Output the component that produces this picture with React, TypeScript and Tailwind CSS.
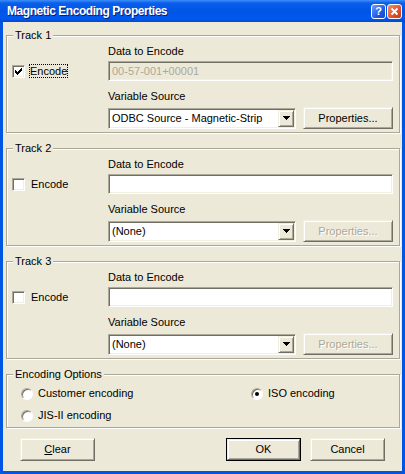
import React from 'react';

const raised =
  'border border-t-[#F1EFE2] border-l-[#F1EFE2] border-b-[#716F64] border-r-[#716F64] shadow-[inset_1px_1px_0_#FFFFFF,inset_-1px_-1px_0_#ACA899] bg-[#ECE9D8]';
const sunken =
  'border border-t-[#ACA899] border-l-[#ACA899] border-b-white border-r-white shadow-[inset_1px_1px_0_#716F64,inset_-1px_-1px_0_#F1EFE2]';

function Group({ title, className = '', children }: { title: string; className?: string; children: React.ReactNode }) {
  return (
    <fieldset
      className={`ml-[3px] mr-[2px] border border-[#ACA899] shadow-[1px_1px_0_#FFFFFF,inset_1px_1px_0_#FFFFFF] ${className}`}
    >
      <legend className="ml-[6px] px-[2px] bg-[#ECE9D8] leading-[13px]">{title}</legend>
      {children}
    </fieldset>
  );
}

function Checkbox({ checked }: { checked?: boolean }) {
  return (
    <div className={`w-[13px] h-[13px] bg-white ${sunken} flex items-center justify-center`}>
      {checked && (
        <svg width="7" height="7" viewBox="0 0 7 7" shapeRendering="crispEdges">
          <path d="M6 0h1v3h-1v1h-1v1h-1v1h-1v1h-1v-1h-1v-1h-1v-3h1v1h1v1h1v-1h1v-1h1v-1h1z" fill="#000" />
        </svg>
      )}
    </div>
  );
}

function Radio({ checked, label }: { checked?: boolean; label: string }) {
  return (
    <div className="flex items-center h-[13px]">
      <div className="w-[12px] h-[12px] rounded-full bg-white border border-t-[#ACA899] border-l-[#ACA899] border-b-white border-r-white shadow-[inset_1px_1px_0_#716F64] flex items-center justify-center">
        {checked && <div className="w-[4px] h-[4px] rounded-full bg-black" />}
      </div>
      <span className="ml-[5px]">{label}</span>
    </div>
  );
}

function Button({ label, disabled, isDefault, className = '' }: { label: React.ReactNode; disabled?: boolean; isDefault?: boolean; className?: string }) {
  const inner = (
    <div className={`w-full h-full ${raised} flex items-center justify-center`}>
      <span className={disabled ? 'text-[#ACA899] [text-shadow:1px_1px_0_#FFFFFF]' : ''}>{label}</span>
    </div>
  );
  if (isDefault) {
    return <div className={`border border-black ${className}`}>{inner}</div>;
  }
  return <div className={className}>{inner}</div>;
}

function Combo({ value }: { value: string }) {
  return (
    <div className={`w-[188px] h-[21px] bg-white ${sunken} flex items-center pl-[3px] pr-[1px]`}>
      <span className="flex-1 truncate">{value}</span>
      <div className={`w-[16px] h-[17px] ${raised} flex items-center justify-center`}>
        <svg width="7" height="4" viewBox="0 0 7 4" shapeRendering="crispEdges">
          <path d="M0 0h7v1h-1v1h-1v1h-1v1h-1v-1h-1v-1h-1v-1h-1z" fill="#000" />
        </svg>
      </div>
    </div>
  );
}

function Track({ n, checked, data, source, disabled, className = '' }: { n: number; checked?: boolean; data: string; source: string; disabled?: boolean; className?: string }) {
  return (
    <Group title={`Track ${n}`} className={className}>
      <div className="flex pl-[5px] pr-[6px] pt-[3px] pb-[3px]">
        <div className="w-[96px] pt-[16px]">
          <div className="h-[20px] flex items-center">
            <Checkbox checked={checked} />
            {checked ? (
              <span className="ml-[4px] px-[1px] leading-[14px] outline outline-1 outline-dotted outline-black -outline-offset-1">Encode</span>
            ) : (
              <span className="ml-[6px]">Encode</span>
            )}
          </div>
        </div>
        <div className="flex-1 flex flex-col">
          <div className="h-[13px] leading-[13px]">Data to Encode</div>
          <div className={`mt-[3px] h-[20px] ${sunken} ${disabled ? 'bg-[#ECE9D8] text-[#ACA899]' : 'bg-white'} flex items-center pl-[3px]`}>
            {data}
          </div>
          <div className="mt-[9px] h-[13px] leading-[13px]">Variable Source</div>
          <div className="mt-[4px] h-[22px] flex items-center">
            <Combo value={source} />
            <Button label="Properties..." disabled={!checked} className="ml-auto w-[90px] h-[22px]" />
          </div>
        </div>
      </div>
    </Group>
  );
}

export default function App() {
  return (
    <div className="w-[405px] h-[474px] bg-[#0055E5] flex flex-col font-['Liberation_Sans',Arial,sans-serif] text-[11px] leading-[13px] text-black">
      <div className="h-[22px] flex items-center pl-[7px] pr-[3px] bg-[linear-gradient(to_bottom,#3D8DF9_0%,#0A5EEB_14%,#0055E5_50%,#0058EE_86%,#0047CF_100%)]">
        <span className="text-white font-bold text-[12px] tracking-[-0.45px] [text-shadow:1px_1px_0_#0A1A7A]">
          Magnetic Encoding Properties
        </span>
        <div className="ml-auto flex gap-[1px]">
          <div className="w-[15px] h-[15px] rounded-[3px] border border-white bg-[linear-gradient(135deg,#6FA0FF,#1E5BE8_60%,#1446C8)] flex items-center justify-center text-white font-bold text-[11px] leading-[11px]">
            ?
          </div>
          <div className="w-[15px] h-[15px] rounded-[3px] border border-white bg-[linear-gradient(135deg,#F2906E,#E0502C_60%,#C13A18)] flex items-center justify-center">
            <svg width="9" height="9" viewBox="0 0 9 9">
              <path d="M1.5 1.5L7.5 7.5M7.5 1.5L1.5 7.5" stroke="#FFFFFF" strokeWidth="1.8" />
            </svg>
          </div>
        </div>
      </div>
      <div className="flex-1 mx-[3px] mb-[3px] bg-[#ECE9D8] flex flex-col">
        <Track n={1} checked data="00-57-001+00001" source="ODBC Source - Magnetic-Strip" disabled className="mt-[7px]" />
        <Track n={2} data="" source="(None)" className="mt-[9px]" />
        <Track n={3} data="" source="(None)" className="mt-[9px]" />
        <Group title="Encoding Options" className="mt-[9px]">
          <div className="grid grid-cols-[230px_1fr] gap-y-[9px] pl-[14px] pt-[6px] pb-[5px]">
            <Radio label="Customer encoding" />
            <Radio checked label="ISO encoding" />
            <Radio label="JIS-II encoding" />
          </div>
        </Group>
        <div className="mt-[10px] flex pl-[17px] pr-[17px]">
          <Button label={<><span className="underline">C</span>lear</>} className="w-[75px] h-[23px]" />
          <Button label="OK" isDefault className="ml-auto w-[75px] h-[23px]" />
          <Button label="Cancel" className="ml-[9px] w-[75px] h-[23px]" />
        </div>
      </div>
    </div>
  );
}
